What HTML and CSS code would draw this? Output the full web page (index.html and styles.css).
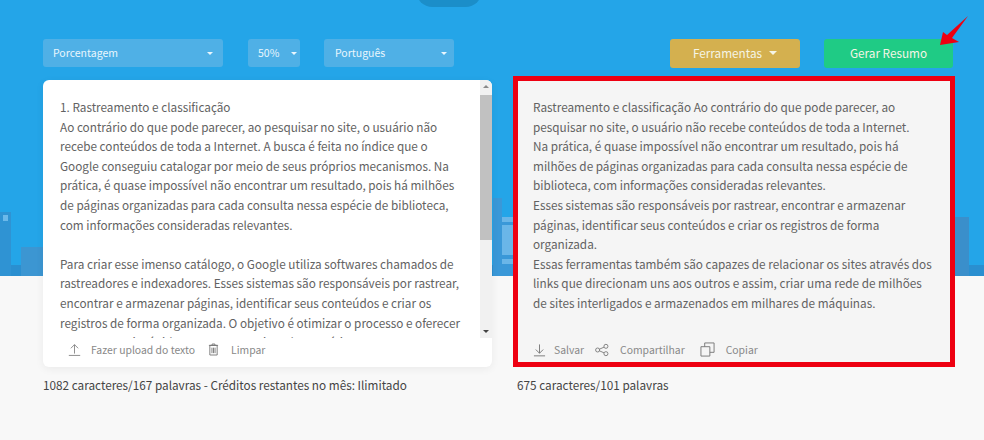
FILE: index.html
```html
<!DOCTYPE html>
<html lang="pt-BR">
<head>
  <meta charset="UTF-8">
  <meta name="viewport" content="width=device-width, initial-scale=1.0">
  <title>Gerar Resumo</title>
  <link rel="stylesheet" href="styles.css">
</head>
<body>
  <div class="hero">
    <div class="tab-notch"></div>
    <div class="city city-band"></div>
    <div class="city city-left"><span class="city-window"></span></div>
    <div class="city city-low"></div>
    <div class="city city-tower"></div>
    <div class="city city-mid">
      <span class="mid-window mid-window-top"></span>
      <span class="mid-window mid-window-big"></span>
      <span class="mid-window mid-window-low"></span>
    </div>
    <div class="city city-right"></div>
  </div>

  <div class="page">
    <div class="toolbar">
      <div class="select select-type">Porcentagem<span class="caret"></span></div>
      <div class="select select-percent">50%<span class="caret"></span></div>
      <div class="select select-lang">Português<span class="caret"></span></div>
      <div class="toolbar-right">
        <button class="btn btn-tools">Ferramentas<span class="caret"></span></button>
        <button class="btn btn-generate">Gerar Resumo</button>
      </div>
    </div>

    <div class="columns">
      <div class="column-left">
        <div class="panel">
          <div class="panel-body">
            <div class="panel-text">
              <p>1. Rastreamento e classificação<br>Ao contrário do que pode parecer, ao pesquisar no site, o usuário não<br>recebe conteúdos de toda a Internet. A busca é feita no índice que o<br>Google conseguiu catalogar por meio de seus próprios mecanismos. Na<br>prática, é quase impossível não encontrar um resultado, pois há milhões<br>de páginas organizadas para cada consulta nessa espécie de biblioteca,<br>com informações consideradas relevantes.</p>
              <p>Para criar esse imenso catálogo, o Google utiliza softwares chamados de<br>rastreadores e indexadores. Esses sistemas são responsáveis por rastrear,<br>encontrar e armazenar páginas, identificar seus conteúdos e criar os<br>registros de forma organizada. O objetivo é otimizar o processo e oferecer<br>respostas mais rápidas para as pesquisas dos usuários.</p>
            </div>
            <div class="scrollbar">
              <span class="arrow-up"></span>
              <div class="scroll-track"><div class="scroll-thumb"></div></div>
              <span class="arrow-down"></span>
            </div>
          </div>
          <div class="actions actions-left">
            <svg class="icon icon-upload" viewBox="0 0 16 16"><path d="M8 13V2M3.500 6.500 8 2l4.500 4.500M1 15.300h14"/></svg>
            <span class="action-label label-upload">Fazer upload do texto</span>
            <svg class="icon icon-trash" viewBox="0 0 12 14"><path d="M1 2.500h10M4.500 2.500V1h3v1.500M2 2.500h8V13H2zM4.300 5v6M6 5v6M7.700 5v6"/></svg>
            <span class="action-label">Limpar</span>
          </div>
        </div>
        <p class="count">1082 caracteres/167 palavras - Créditos restantes no mês: Ilimitado</p>
      </div>

      <div class="column-right">
        <div class="result">
          <p class="result-text">Rastreamento e classificação Ao contrário do que pode parecer, ao<br>pesquisar no site, o usuário não recebe conteúdos de toda a Internet.<br>Na prática, é quase impossível não encontrar um resultado, pois há<br>milhões de páginas organizadas para cada consulta nessa espécie de<br>biblioteca, com informações consideradas relevantes.<br>Esses sistemas são responsáveis por rastrear, encontrar e armazenar<br>páginas, identificar seus conteúdos e criar os registros de forma<br>organizada.<br>Essas ferramentas também são capazes de relacionar os sites através dos<br>links que direcionam uns aos outros e assim, criar uma rede de milhões<br>de sites interligados e armazenados em milhares de máquinas.</p>
          <div class="actions actions-right">
            <svg class="icon icon-save" viewBox="0 0 14 14"><path d="M7 1v9.500M3 6.500l4 4 4-4M1 13.300h12"/></svg>
            <span class="action-label label-save">Salvar</span>
            <svg class="icon icon-share" viewBox="0 0 16 14"><circle cx="3" cy="7" r="2.300"/><circle cx="12.500" cy="2.800" r="2.300"/><circle cx="12.500" cy="11.200" r="2.300"/><path d="M5 6.100 10.400 3.700M5 7.900l5.400 2.400"/></svg>
            <span class="action-label label-share">Compartilhar</span>
            <svg class="icon icon-copy" viewBox="0 0 16 16"><path d="M1 5h9.500v10H1zM5 5V1h10v10h-4.500"/></svg>
            <span class="action-label">Copiar</span>
          </div>
        </div>
        <p class="count">675 caracteres/101 palavras</p>
      </div>
    </div>
  </div>

  <svg class="pointer" viewBox="0 0 30 32"><path d="M1 31 4 18l4 3L29 2 13 24l7 4z"/></svg>
</body>
</html>
```

FILE: styles.css
```css
* {
  box-sizing: border-box;
}

body {
  margin: 0;
  height: 440px;
  overflow: hidden;
  position: relative;
  background: #f8f8f8;
  color: #626262;
  font-family: "Noto Sans CJK SC", "Noto Sans", sans-serif;
  font-size: 11.750px;
}

.hero {
  position: absolute;
  top: 0;
  left: 0;
  width: 100%;
  height: 276px;
  background: #24a5e8;
  overflow: hidden;
}

.tab-notch {
  position: absolute;
  left: 416px;
  top: -26px;
  width: 66px;
  height: 33px;
  border-radius: 20px;
  background: #1b8ec9;
}

.city {
  position: absolute;
  bottom: 0;
  background: #2f93d3;
}

.city-band {
  left: 0;
  width: 100%;
  height: 11px;
  background: #2a8fd0;
}

.city-left {
  left: 0;
  width: 11px;
  height: 64px;
}

.city-window {
  position: absolute;
  left: 3px;
  top: 3px;
  width: 5px;
  height: 6px;
  background: #6cb9ea;
}

.city-low {
  left: 21px;
  width: 22px;
  height: 29px;
  background: #3c96d2;
}

.city-tower {
  left: 493px;
  width: 9px;
  height: 78px;
  background: #3a98d8;
}

.city-mid {
  left: 493px;
  width: 20px;
  height: 59px;
  background: #3a98d8;
}

.mid-window {
  position: absolute;
  left: 9px;
  right: 0;
  background: #6ab6e8;
}

.mid-window-top {
  top: 0;
  height: 5px;
}

.mid-window-big {
  top: 8px;
  height: 30px;
}

.mid-window-low {
  top: 42px;
  height: 5px;
}

.city-right {
  left: 955px;
  width: 14px;
  height: 59px;
  background: #3a8fcb;
}

.page {
  position: relative;
  padding: 39px 31px 0 43px;
}

.toolbar {
  display: flex;
  align-items: flex-start;
  height: 41px;
}

.select {
  height: 28px;
  padding: 0 7px 2px 10px;
  display: flex;
  align-items: center;
  justify-content: space-between;
  border-radius: 3px;
  background: #4fb0e6;
  color: #e9f6fd;
  font-size: 10.500px;
}

.select .caret {
  margin-top: 2px;
}

.select-type {
  width: 180px;
  margin-right: 25px;
  padding-right: 10px;
}

.select-percent {
  width: 52px;
  margin-right: 24px;
  padding-right: 3px;
}

.select-lang {
  width: 130px;
  padding-left: 11px;
}

.caret {
  width: 0;
  height: 0;
  border-left: 3px solid transparent;
  border-right: 3px solid transparent;
  border-top: 3px solid currentColor;
}

.toolbar-right {
  margin-left: auto;
  display: flex;
  gap: 24px;
}

.btn {
  width: 130px;
  height: 29px;
  padding: 0 0 2px;
  border: none;
  border-radius: 3px;
  color: #f5f5e6;
  font-family: inherit;
  font-size: 11.750px;
  display: flex;
  align-items: center;
  justify-content: center;
}

.btn .caret {
  margin-left: 7px;
  border-left-width: 4px;
  border-right-width: 4px;
  border-top-width: 4px;
}

.btn-tools {
  background: #d4b04f;
}

.btn-generate {
  width: 129px;
  background: #1fcb85;
}

.columns {
  display: flex;
  gap: 21px;
}

.column-left {
  flex: none;
  width: 449px;
}

.column-right {
  flex: none;
  width: 442px;
  margin-top: -4px;
}

.panel {
  height: 287px;
  border-radius: 6px;
  background: #fff;
  box-shadow: 0 2px 8px rgba(0, 0, 0, 0.06);
  overflow: hidden;
}

.panel-body {
  height: 258px;
  display: flex;
  overflow: hidden;
}

.panel-text {
  flex: 1;
  min-width: 0;
  padding: 17px 0 0 17px;
  line-height: 19.600px;
  white-space: nowrap;
}

.panel-text p {
  margin: 0 0 19.600px;
}

.scrollbar {
  flex: none;
  width: 12px;
  height: 100%;
  background: #f1f1f1;
  display: flex;
  flex-direction: column;
  align-items: center;
  justify-content: space-between;
  padding: 5px 0;
}

.scroll-track {
  flex: 1;
  width: 100%;
  padding-top: 7px;
}

.scroll-thumb {
  height: 145px;
  background: #c1c1c1;
}

.arrow-up,
.arrow-down {
  flex: none;
  width: 0;
  height: 0;
  border-left: 3px solid transparent;
  border-right: 3px solid transparent;
}

.arrow-up {
  border-bottom: 3px solid #8a8a8a;
}

.arrow-down {
  border-top: 3px solid #444;
}

.actions {
  display: flex;
  align-items: center;
  color: #888;
  font-size: 10.400px;
}

.actions-left {
  height: 29px;
  padding: 0 0 6px 25px;
}

.icon {
  flex: none;
  fill: none;
  stroke: #777;
  stroke-width: 1;
}

.icon-upload {
  width: 13px;
  height: 15px;
  margin-right: 10px;
}

.label-upload {
  margin-right: 13px;
}

.icon-trash {
  width: 11px;
  height: 13px;
  margin-right: 12px;
}

.result {
  height: 291px;
  border: 5px solid #ee0011;
  background: #f5f5f5;
  padding: 16px 0 0 15px;
  display: flex;
  flex-direction: column;
}

.result-text {
  margin: 0;
  line-height: 19.600px;
  white-space: nowrap;
}

.actions-right {
  margin-top: auto;
  height: 25px;
}

.icon-save {
  width: 13px;
  height: 14px;
  margin-right: 8px;
}

.label-save {
  margin-right: 11px;
}

.icon-share {
  width: 14px;
  height: 14px;
  margin-right: 11px;
}

.label-share {
  margin-right: 15px;
}

.icon-copy {
  width: 15px;
  height: 15px;
  margin-right: 11px;
}

.count {
  margin: 10px 0 0;
  color: #444;
  font-size: 11.750px;
  line-height: 16px;
}

.column-right .count {
  margin-left: 4px;
}

.pointer {
  position: absolute;
  left: 939px;
  top: 14px;
  width: 30px;
  height: 32px;
  fill: #ee0011;
}
```
